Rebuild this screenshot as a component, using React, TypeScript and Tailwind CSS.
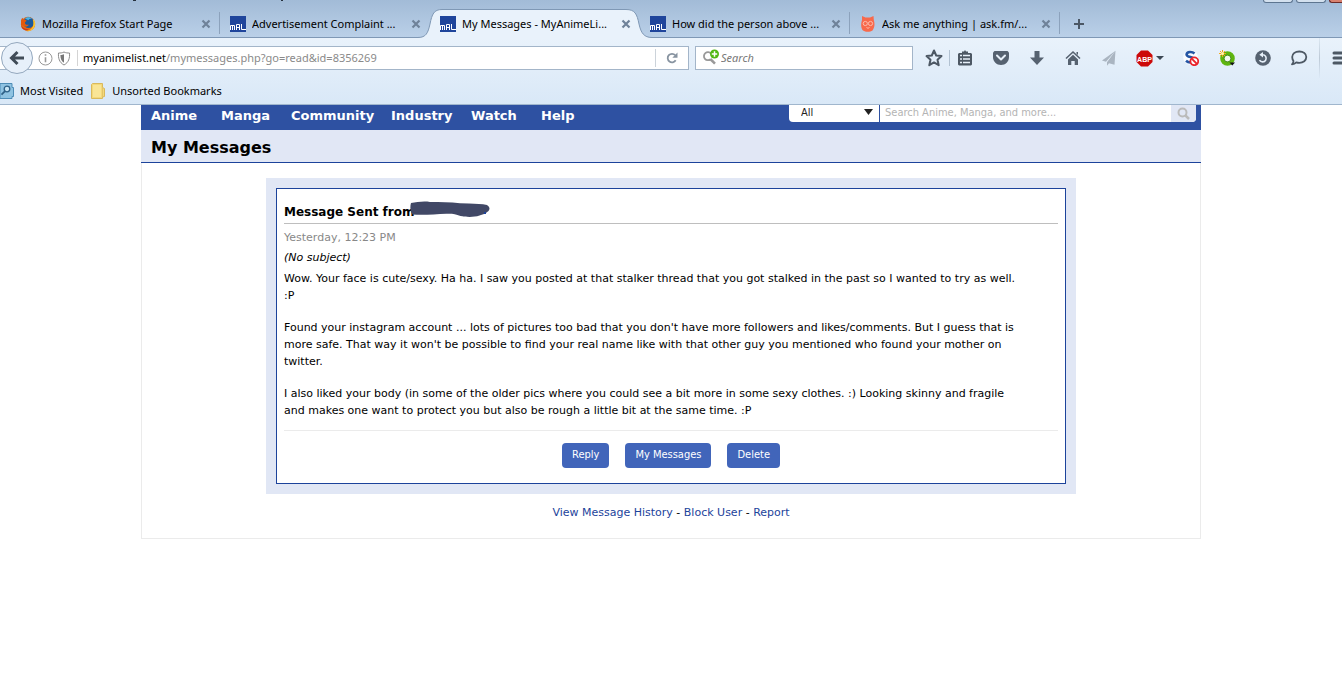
import { ReactNode } from "react";

interface Tab {
  title: string;
  icon: ReactNode;
  active?: boolean;
  divider?: boolean;
}

const navLinks = [
  { label: "Anime", width: "w-[70px]" },
  { label: "Manga", width: "w-[70px]" },
  { label: "Community", width: "w-[100px]" },
  { label: "Industry", width: "w-[80px]" },
  { label: "Watch", width: "w-[70px]" },
  { label: "Help", width: "w-[70px]" },
];

function FirefoxIcon() {
  return (
    <svg width="16" height="16" viewBox="0 0 16 16">
      <circle cx="8" cy="8" r="7.2" fill="#e66b13" />
      <circle cx="8.6" cy="6.6" r="5.4" fill="#1c5a9c" />
      <path d="M5 2.6C7 .9 10.400.8 12.200 3 10.500 2.600 9 3.200 8.500 4.200Z" fill="#49b4e6" />
      <path d="M1 4.500C1.200 3.200 1.800 2.400 2.500 1.700 2.800 3 3.600 3.400 4.500 3.500 5.500 3.700 6.600 4.200 6.500 5 5.600 5.800 4.700 6 5 7.300 5.500 8.600 7 9.200 8.800 8.600 8 11 4.800 11.300 3.200 9.600L1 9Z" fill="#e3590f" />
      <path d="M13.500 3.500C15.500 5.500 15.800 9 14.200 11.600 12.500 14.600 9 15.800 6 14.900 10 14.600 13 12 13.300 8.500 13.500 6.500 13.300 5 12.700 3.700Z" fill="#fbc52d" />
      <path d="M1 8.500C2 12 5.500 13.600 9 12.800 7.500 15 3.500 14.600 1.700 11.600Z" fill="#c9371a" />
    </svg>
  );
}

function MalIcon() {
  return (
    <svg width="16" height="16" viewBox="0 0 16 16">
      <path fill="#1f459b" d="M0 0h16v16H0z" />
      <path d="M.5 14V9.500H4.500V14M2.500 9.500V14M6.500 14V8.500H9.500V14M6.500 11.500h3M11.500 8V13.500H16" fill="none" stroke="#fff" />
    </svg>
  );
}

function AskIcon() {
  return (
    <svg width="16" height="16" viewBox="0 0 16 16">
      <path d="M2 0 5.500 1.600H10L13.500 0 13.800 4C15 8 14.600 12 12.500 14.500 10 16.300 5.500 16.300 3 14.500.8 12 .7 8 2 4Z" fill="#f8694b" />
      <g fill="none" stroke="#fcc3b4" strokeWidth=".9">
        <circle cx="5.300" cy="7.500" r="2.100" />
        <circle cx="10.500" cy="7.500" r="2.100" />
        <path d="m6.500 11.500 1.500.8 1.500-.8" />
      </g>
    </svg>
  );
}

const tabs: Tab[] = [
  { title: "Mozilla Firefox Start Page", icon: <FirefoxIcon />, divider: true },
  { title: "Advertisement Complaint ...", icon: <MalIcon /> },
  { title: "My Messages - MyAnimeLi...", icon: <MalIcon />, active: true },
  { title: "How did the person above ...", icon: <MalIcon />, divider: true },
  { title: "Ask me anything | ask.fm/...", icon: <AskIcon />, divider: true },
];

function TabItem({ tab }: { tab: Tab }) {
  return (
    <div className={tab.active ? "relative z-10 flex w-[210px] items-center pt-[10px] pl-[10px]" : "relative flex w-[210px] items-center pt-[10px] pl-[10px]"}>
      {tab.active && (
        <svg className="absolute top-0 -left-[12px]" width="234" height="39" viewBox="0 0 234 39">
          <path d="M0 39V37.500C8 37.500 10 33 12 24 14 14 16 9.500 24 9.500H208C217 9.500 219 14 221 24 223 33 226 37.500 234 37.500V39Z" fill="#e9f2fb" />
          <path d="M0 37.500C8 37.500 10 33 12 24 14 14 16 9.500 24 9.500H208C217 9.500 219 14 221 24 223 33 226 37.500 234 37.500" fill="none" stroke="#7f98b5" />
        </svg>
      )}
      <span className="relative shrink-0">{tab.icon}</span>
      <span className="relative ml-[6px] flex-1 overflow-hidden whitespace-nowrap">{tab.title}</span>
      <button aria-label="Close tab" className="relative mr-[9px] shrink-0">
        <svg width="10" height="10" viewBox="0 0 10 10">
          <path d="m1.500 1.500 7 7m0-7-7 7" stroke="#6f8299" strokeWidth="2.200" />
        </svg>
      </button>
      {tab.divider && <span className="absolute right-0 bottom-[3px] h-[22px] w-px bg-[#8ca2bc]" />}
    </div>
  );
}

function TabStrip() {
  return (
    <div className="relative flex h-[38px] border-b border-[#7f98b5] bg-linear-to-b from-[#a2bbd7] to-[#bad0e8] pl-[10px]">
      {tabs.map((tab) => (
        <TabItem key={tab.title} tab={tab} />
      ))}
      <button aria-label="New tab" className="ml-[13px] pt-[10px]">
        <svg width="12" height="12" viewBox="0 0 12 12">
          <path d="M6 1v10M1 6h10" stroke="#4b5765" strokeWidth="2" />
        </svg>
      </button>
      {/* bottom edge of the window title and its buttons */}
      <span className="absolute top-0 left-[133px] h-px w-[3px] bg-[#25303d]" />
      <span className="absolute top-0 left-[281px] h-px w-[2px] bg-[#25303d]" />
      <div className="absolute top-0 right-0 flex gap-[3px]">
        <span className="h-[3px] w-[30px] rounded-b-sm border border-t-0 border-[#5d7590] bg-[#d3e0ee]" />
        <span className="h-[3px] w-[30px] rounded-b-sm border border-t-0 border-[#5d7590] bg-[#d3e0ee]" />
        <span className="h-[3px] w-[13px] rounded-bl-sm border border-t-0 border-r-0 border-[#6b2a28] bg-[#d8816f]" />
      </div>
    </div>
  );
}

function ToolButton({ label, children }: { label: string; children: ReactNode }) {
  return (
    <button aria-label={label} className="flex w-9 shrink-0 items-center justify-center">
      {children}
    </button>
  );
}

function ToolbarIcons() {
  return (
    <div className="flex h-full w-[426px] shrink-0 items-center overflow-hidden">
      <ToolButton label="Bookmark this page">
        <svg width="18" height="18" viewBox="0 0 18 18" className="shrink-0">
          <path d="m9 1.500 2.200 5 5.300.6-4 3.700 1.200 5.400L9 13.400l-4.700 2.800 1.200-5.400-4-3.700 5.300-.6Z" fill="none" stroke="#4d5864" strokeWidth="2" strokeLinejoin="round" />
        </svg>
      </ToolButton>
      <span className="-ml-[3px] h-4 w-px shrink-0 bg-[#b2c2d2]" />
      <button aria-label="Show bookmarks" className="mr-[3px] flex w-[30px] shrink-0 items-center justify-center">
        <svg width="16" height="16" viewBox="0 0 16 16">
          <path d="M2 3h3V1.500h2L8 0l1 1.500h2V3h3l1 1v10.500l-1 1H2l-1-1V4Z" fill="#4d5864" />
          <path d="M3 5.500h2m1 0H13M3 9h2m1 0H13M3 12.500h2m1 0H13" stroke="#e7f0f9" strokeWidth="1.700" />
        </svg>
      </button>
      <ToolButton label="Pocket">
        <svg width="16" height="16" viewBox="0 0 16 16">
          <path d="M1.500 1h13L16 2.500V7c0 4.500-3.500 8-8 8S0 11.500 0 7V2.500Z" fill="#566270" />
          <path d="m4 5.500 4 4 4-4" fill="none" stroke="#e7f0f9" strokeWidth="2" strokeLinecap="round" strokeLinejoin="round" />
        </svg>
      </ToolButton>
      <ToolButton label="Downloads">
        <svg width="16" height="16" viewBox="0 0 16 16">
          <path d="M5.500 1h5v6.500H15l-7 7.500-7-7.500h4.500Z" fill="#566270" />
        </svg>
      </ToolButton>
      <ToolButton label="Home">
        <svg width="16" height="16" viewBox="0 0 16 16">
          <path d="M1 8.500 8 2l7 6.500" fill="none" stroke="#566270" strokeWidth="1.600" />
          <path d="m8 4.800 5 4.700V15H9.700v-4H6.300v4H3V9.500Z" fill="#566270" />
          <path d="M11.500 2H13v3l-1.500-1.300Z" fill="#566270" />
        </svg>
      </ToolButton>
      <ToolButton label="Share">
        <svg width="16" height="16" viewBox="0 0 16 16">
          <path d="M14.500.8 1 10.500l4 1.300Zm0 0L6 12.300v3.500l2-2.500 5.500 1.500Z" fill="#aab5c1" />
        </svg>
      </ToolButton>
      <button aria-label="Adblock Plus" className="flex w-[46px] shrink-0 items-center justify-center gap-[3px]">
        <svg width="17" height="17" viewBox="0 0 17 17">
          <path d="M5 .5h7L16.500 5v7L12 16.500H5L.5 12V5Z" fill="#cc0909" />
          <text x="8.500" y="11.500" fill="#fff" fontSize="7" fontWeight="700" textAnchor="middle" fontFamily="Liberation Sans, sans-serif">ABP</text>
        </svg>
        <svg width="8" height="4" viewBox="0 0 8 4">
          <path d="M0 0h8L4 4Z" fill="#3c4753" />
        </svg>
      </button>
      <ToolButton label="Script blocker">
        <svg width="16" height="16" viewBox="0 0 16 16">
          <circle cx="7.500" cy="7.500" r="7.300" fill="#fafcff" />
          <path d="M11.500 3.500C9 1.200 4 1.500 3.600 4.400c0 3.300 7.700 2 7.700 5.400-.3 3-5.500 3.500-8.300 1" fill="none" stroke="#2455a4" strokeWidth="2.600" />
          <circle cx="11.300" cy="11.300" r="3.900" fill="#fff" stroke="#ea242b" strokeWidth="1.800" />
          <path d="m8.700 8.700 5.300 5.300" stroke="#ea242b" strokeWidth="1.800" />
        </svg>
      </ToolButton>
      <ToolButton label="Highlighter">
        <svg width="16" height="16" viewBox="0 0 16 16">
          <circle cx="8.500" cy="8.500" r="5.300" fill="#f4faef" stroke="#5fb50f" strokeWidth="4" />
          <circle cx="8.500" cy="8.500" r="3.400" fill="none" stroke="#347b10" strokeWidth=".8" />
          <path d="M3.500 0v7M0 3.500h7M1 1l5 5m0-5L1 6" stroke="#f7a81b" />
          <circle cx="3.500" cy="3.500" r="1.500" fill="#fff5b5" />
          <path d="M10.500 12.500H16l-2.700 3Z" fill="#111" />
        </svg>
      </ToolButton>
      <ToolButton label="Undo close tab">
        <svg width="16" height="16" viewBox="0 0 16 16">
          <circle cx="8" cy="8" r="7.800" fill="#566270" />
          <path d="M7.500 4.700a3.600 3.600 0 1 1-3 5.500" fill="none" stroke="#e7f0f9" strokeWidth="1.600" />
          <path d="M8 2v5.400L4.300 4.700Z" fill="#e7f0f9" />
        </svg>
      </ToolButton>
      <ToolButton label="Start a conversation">
        <svg width="18" height="16" viewBox="0 0 18 16">
          <path d="M9.300 1.500c4 0 7 2.300 7 5.600s-3 5.700-7 5.700c-1.300 0-2.200-.2-3-.5-1 1-2.300 1.800-4.300 2 1-1 1.400-2 1.500-3.300-.8-.9-1.300-2.200-1.300-3.900 0-3.300 3.100-5.600 7.100-5.600Z" fill="none" stroke="#4d5864" strokeWidth="1.800" strokeLinejoin="round" />
        </svg>
      </ToolButton>
      <span className="ml-[2px] h-full w-px shrink-0 bg-linear-to-b from-[#dce7f2] via-[#bdcad7] to-[#dce9f7]" />
      <button aria-label="Open menu" className="ml-[12px] shrink-0">
        <svg width="18" height="14" viewBox="0 0 18 14">
          <path d="M2 2h14M2 7h14M2 12h14" stroke="#4d5864" strokeWidth="3" strokeLinecap="round" />
        </svg>
      </button>
    </div>
  );
}

function Toolbar() {
  return (
    <div className="flex h-10 items-center">
      <div className="relative flex h-6 min-w-0 flex-1 items-center border border-l-0 border-[#a3b5c9] bg-white pl-[38px]">
        <button aria-label="Back" className="absolute left-[1px] flex size-8 items-center justify-center rounded-full border border-[#94a8be] bg-[#e7f0fa]">
          <svg width="16" height="16" viewBox="0 0 16 16">
            <path d="M8.500 2 2.500 8l6 6M3 8h12" fill="none" stroke="#414c58" strokeWidth="3" />
          </svg>
        </button>
        <svg width="15" height="15" viewBox="0 0 15 15" className="shrink-0">
          <circle cx="7.500" cy="7.500" r="6.500" fill="none" stroke="#999" />
          <path d="M7.500 3.200v1.600M7.500 6.300v5" stroke="#999" strokeWidth="1.600" />
        </svg>
        <svg width="14" height="15" viewBox="0 0 14 15" className="ml-[4px] shrink-0">
          <path d="M7 1c2 1 3.500 1 5.500 1 .4 5-.8 9.500-5.500 12C2.300 11.500 1.100 7 1.500 2 3.500 2 5 2 7 1Z" fill="#fff" stroke="#8b8b8b" />
          <path d="M7 3.200v8.600C4.500 10 3.400 7.500 3.400 3.900 5 3.900 6 3.700 7 3.200Z" fill="#777" />
        </svg>
        <span className="ml-[6px] h-4 w-px bg-[#d4d4d4]" />
        <p className="ml-[5px] flex-1 overflow-hidden whitespace-nowrap text-[#8a8a8a]">
          <span className="text-black">myanimelist.net</span>/mymessages.php?go=read&amp;id=8356269
        </p>
        <span className="h-[18px] w-px bg-[#ccd3da]" />
        <button aria-label="Reload" className="flex w-8 items-center justify-center">
          <svg width="12" height="12" viewBox="0 0 12 12">
            <path d="M9.700 8.300a4.300 4.300 0 1 1-.5-5.100" fill="none" stroke="#8793a0" strokeWidth="1.800" />
            <path d="M11.500.5v5.200H6.300Z" fill="#8793a0" />
          </svg>
        </button>
      </div>
      <label className="mr-[3px] ml-[6px] flex h-6 w-[218px] shrink-0 items-center border border-[#a3b5c9] bg-white pl-[6px]">
        <svg width="18" height="18" viewBox="0 0 18 18" className="shrink-0">
          <path d="M9 4.600A4 4 0 1 0 8.600 10.200" fill="none" stroke="#999" strokeWidth="1.800" />
          <path d="m8.300 10 4.700 4.700" stroke="#999" strokeWidth="2.500" />
          <circle cx="12.500" cy="5" r="4.500" fill="#52b814" />
          <path d="M12.500 2.300v5.400M9.800 5h5.400" stroke="#fff" strokeWidth="1.500" />
        </svg>
        <input aria-label="Search" placeholder="Search" className="ml-[1px] min-w-0 flex-1 outline-none placeholder:text-[#777] placeholder:italic" />
      </label>
      <ToolbarIcons />
    </div>
  );
}

function BookmarksBar() {
  return (
    <div className="flex h-[26px] items-center">
      <a href="#" className="flex items-center gap-[6px]">
        <svg width="14" height="16" viewBox="0 0 14 16">
          <path d="M0 .5h12v4h1.500v9H12v2H0Z" fill="#8fc3e2" stroke="#4e8db7" />
          <circle cx="7" cy="6" r="2.800" fill="#c8e6f6" stroke="#2f6288" strokeWidth="1.300" />
          <path d="m5 8.200-3.500 3.500" stroke="#2f6288" strokeWidth="1.800" />
        </svg>
        Most Visited
      </a>
      <a href="#" className="ml-[8px] flex items-center gap-[6px]">
        <svg width="15" height="16" viewBox="0 0 15 16">
          <path d="M.5 1.500 1.500.5h10v4l2 1v8l-2 .5v1.500H.5Z" fill="#f4d97a" stroke="#d9b95c" />
          <path d="M2 2h8v12H2Z" fill="#f9e596" />
          <path d="M11.500 5v9" stroke="#e2c468" />
        </svg>
        Unsorted Bookmarks
      </a>
    </div>
  );
}

function SiteNav() {
  return (
    <nav className="flex h-[25px] items-start bg-[#2e51a2] pr-[5px] pl-[10px]">
      <div className="flex flex-1 text-[13px] leading-[21px] font-bold text-white">
        {navLinks.map((link) => (
          <a key={link.label} href="#" className={link.width}>{link.label}</a>
        ))}
      </div>
      <form className="flex h-[17px] overflow-hidden rounded-b bg-white font-['DejaVu_Sans_Condensed','DejaVu_Sans',sans-serif] text-[11px]">
        <div className="relative w-[91px] border-r border-[#2e51a2]">
          <select aria-label="Search in" className="block h-[17px] w-full appearance-none pl-3 text-[#222] outline-none">
            <option>All</option>
          </select>
          <svg className="pointer-events-none absolute top-[4px] right-[6px]" width="9" height="6" viewBox="0 0 9 6">
            <path d="M0 0h9L4.500 6Z" fill="#222" />
          </svg>
        </div>
        <input aria-label="Search Anime, Manga, and more" placeholder="Search Anime, Manga, and more..." className="w-[291px] pl-[5px] outline-none placeholder:text-[#b4b4b4]" />
        <button aria-label="Search" className="flex w-[25px] items-center justify-center bg-[#e1e7f5]">
          <svg width="13" height="13" viewBox="0 0 13 13">
            <circle cx="5.500" cy="5.500" r="4" fill="none" stroke="#bbb" strokeWidth="2" />
            <path d="m8.500 8.500 3.500 3.500" stroke="#bbb" strokeWidth="2.500" />
          </svg>
        </button>
      </form>
    </nav>
  );
}

function Message() {
  return (
    <div className="mx-auto max-w-[810px] bg-[#e1e7f5] p-[10px]">
      <article className="border border-[#1c439b] bg-white px-[7px] pt-[12px] pb-[15px]">
        <h2 className="flex h-[23px] border-b border-[#bebebe] text-[12px] leading-[22px] font-bold">
          Message Sent from
          <svg className="-ml-[5px]" width="80" height="18" viewBox="0 0 80 18">
            <path d="M1 2C7 1 14-.2 20 1c10 .2 20 0 30 1.200l9 .3c7 .2 13 .5 18 1.500 3 2 3 4 1.500 6-3 3-6 3.500-9 4.500-6 2-14 1.500-19 .5-5-2-8-2.500-14-2.300C25 13 14 14.500 2.500 13.500 0 11 0 5 1 2Z" fill="#414866" />
            <path d="M75 11v2" stroke="#1c439b" strokeWidth="2" />
          </svg>
        </h2>
        <p className="mt-[5px] leading-[17px] text-[#888]">Yesterday, 12:23 PM</p>
        <p className="mt-[3px] leading-[17px] italic">(No subject)</p>
        <div className="mt-[4px] flex flex-col gap-[15px] leading-[17px]">
          <p>
            Wow. Your face is cute/sexy. Ha ha. I saw you posted at that stalker thread that you got stalked in the past so I wanted to try as well.
            <br />
            :P
          </p>
          <p>
            Found your instagram account ... lots of pictures too bad that you don't have more followers and likes/comments. But I guess that is
            <br />
            more safe. That way it won't be possible to find your real name like with that other guy you mentioned who found your mother on
            <br />
            twitter.
          </p>
          <p>
            I also liked your body (in some of the older pics where you could see a bit more in some sexy clothes. :) Looking skinny and fragile
            <br />
            and makes one want to protect you but also be rough a little bit at the same time. :P
          </p>
        </div>
        <div className="mt-[11px] flex justify-center gap-4 border-t border-[#ebebeb] pt-3 font-['DejaVu_Sans_Condensed','DejaVu_Sans',sans-serif] text-white">
          <button className="h-[25px] rounded bg-[#4165ba] px-[10px]">Reply</button>
          <button className="h-[25px] rounded bg-[#4165ba] px-[10px]">My Messages</button>
          <button className="h-[25px] rounded bg-[#4165ba] px-[10px]">Delete</button>
        </div>
      </article>
    </div>
  );
}

export default function App() {
  return (
    <div className="min-h-screen overflow-x-hidden bg-white">
      <header className="border-b border-[#a0b6cd] bg-[#d9e8f7] font-['Noto_Sans',sans-serif] text-[11px] leading-4 text-black">
        <TabStrip />
        <div className="bg-linear-to-b from-[#e9f2fb] to-[#d9e8f7]">
          <Toolbar />
          <BookmarksBar />
        </div>
      </header>

      <main className="mx-auto max-w-[1060px] font-['DejaVu_Sans',Verdana,sans-serif] text-[11px] text-black">
        <SiteNav />
        <h1 className="h-[33px] border-b border-[#1c439b] bg-[#e1e7f5] pl-[10px] text-[16px] leading-[35px] font-bold">My Messages</h1>
        <div className="border border-t-0 border-[#ebebeb] pt-[15px] pb-[17px]">
          <Message />
          <p className="mt-[10px] text-center leading-[17px]">
            <a href="#" className="text-[#1c439b]">View Message History</a> - <a href="#" className="text-[#1c439b]">Block User</a> - <a href="#" className="text-[#1c439b]">Report</a>
          </p>
        </div>
      </main>
    </div>
  );
}
